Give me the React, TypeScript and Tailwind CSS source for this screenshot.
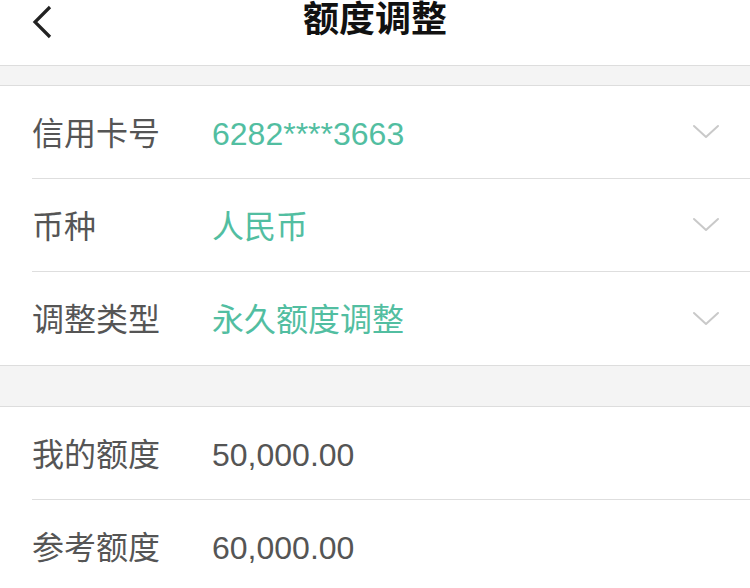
const font = { fontFamily: '"Liberation Sans", "Noto Sans CJK SC", sans-serif' };

type Row = { label: string; value: string; select?: boolean };

const selectRows: Row[] = [
  { label: "信用卡号", value: "6282****3663", select: true },
  { label: "币种", value: "人民币", select: true },
  { label: "调整类型", value: "永久额度调整", select: true },
];

const infoRows: Row[] = [
  { label: "我的额度", value: "50,000.00" },
  { label: "参考额度", value: "60,000.00" },
];

function ChevronDown() {
  return (
    <svg width="28" height="18" viewBox="0 0 28 18" fill="none">
      <path d="M2 3 L14 14 L26 3" stroke="#c9c9c9" strokeWidth="2" strokeLinecap="round" strokeLinejoin="round" />
    </svg>
  );
}

function FormRow({ row, last }: { row: Row; last: boolean }) {
  return (
    <div className="pl-[32px]">
      <div className={`flex h-[93px] items-center pr-[30px] ${last ? "" : "border-b border-[#dedede]"}`}>
        <span className="w-[180px] pt-[3px] text-[32px] text-[#555555]">{row.label}</span>
        <span className={`flex-1 pt-[3px] text-[32px] ${row.select ? "text-[#52bea1]" : "text-[#555555]"}`}>{row.value}</span>
        {row.select ? <ChevronDown /> : null}
      </div>
    </div>
  );
}

export default function App() {
  return (
    <div className="h-[588px] w-[750px] overflow-hidden bg-white" style={font}>
      <header className="relative flex h-[65px] justify-center">
        <svg className="absolute left-[30px] top-[5px]" width="26" height="34" viewBox="0 0 26 34" fill="none">
          <path d="M20 2 L5 17 L20 32" stroke="#222222" strokeWidth="3.2" strokeLinejoin="miter" />
        </svg>
        <h1 className="text-[36px] font-bold leading-[40px] text-[#111111]">额度调整</h1>
      </header>
      <div className="h-[21px] border-y border-[#dddddd] bg-[#f4f4f4]" />
      {selectRows.map((row, i) => (
        <FormRow key={row.label} row={row} last={i === selectRows.length - 1} />
      ))}
      <div className="h-[42px] border-y border-[#dddddd] bg-[#f4f4f4]" />
      {infoRows.map((row, i) => (
        <FormRow key={row.label} row={row} last={i === infoRows.length - 1} />
      ))}
    </div>
  );
}
